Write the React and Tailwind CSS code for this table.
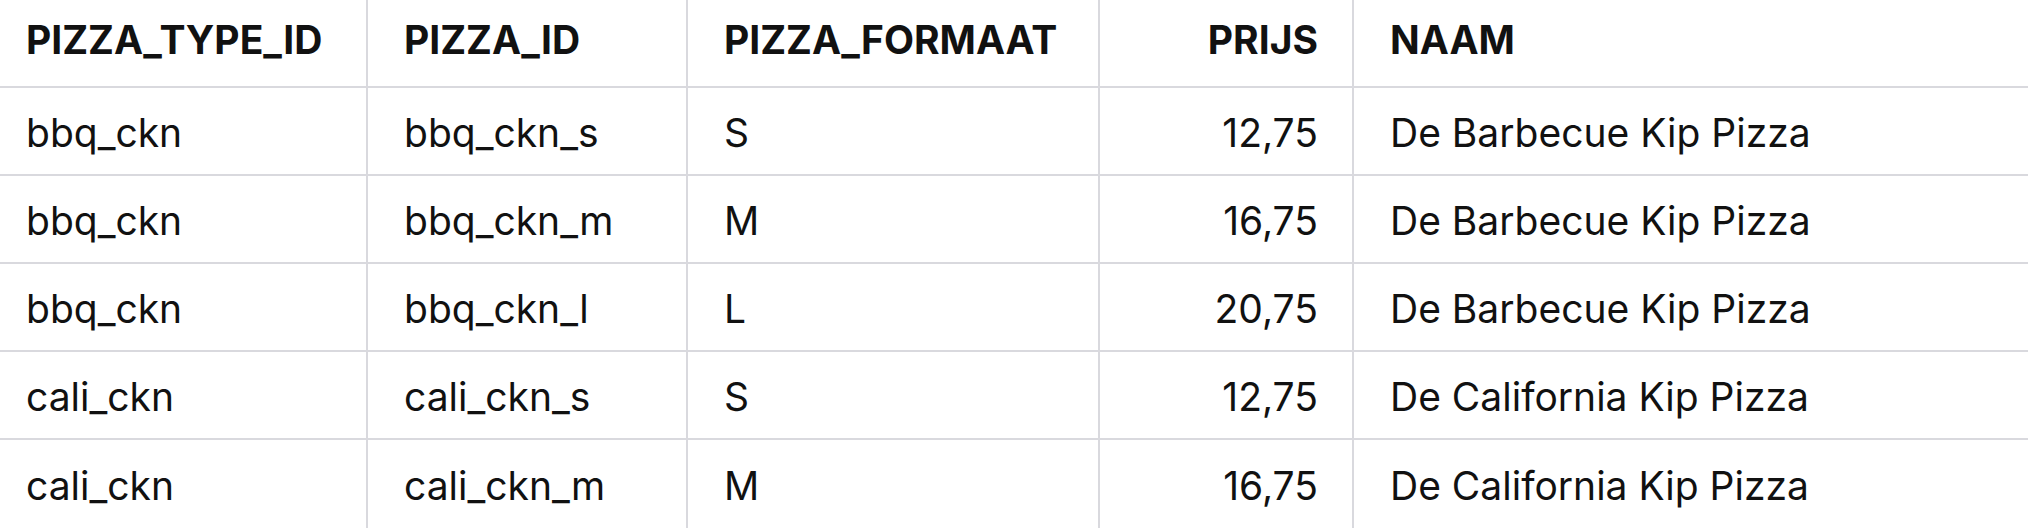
const columns = [
  { key: "typeId", label: "PIZZA_TYPE_ID" },
  { key: "pizzaId", label: "PIZZA_ID" },
  { key: "formaat", label: "PIZZA_FORMAAT" },
  { key: "prijs", label: "PRIJS", right: true },
  { key: "naam", label: "NAAM" },
];

const rows = [
  { typeId: "bbq_ckn", pizzaId: "bbq_ckn_s", formaat: "S", prijs: "12,75", naam: "De Barbecue Kip Pizza" },
  { typeId: "bbq_ckn", pizzaId: "bbq_ckn_m", formaat: "M", prijs: "16,75", naam: "De Barbecue Kip Pizza" },
  { typeId: "bbq_ckn", pizzaId: "bbq_ckn_l", formaat: "L", prijs: "20,75", naam: "De Barbecue Kip Pizza" },
  { typeId: "cali_ckn", pizzaId: "cali_ckn_s", formaat: "S", prijs: "12,75", naam: "De California Kip Pizza" },
  { typeId: "cali_ckn", pizzaId: "cali_ckn_m", formaat: "M", prijs: "16,75", naam: "De California Kip Pizza" },
];

const cellBase = [
  "pl-[26px] pr-4",
  "pl-[36px] pr-4 border-l-2 border-[#d9d9de]",
  "pl-[36px] pr-4 border-l-2 border-[#d9d9de]",
  "pl-4 pr-[34px] border-l-2 border-[#d9d9de] justify-end",
  "pl-[36px] pr-4 border-l-2 border-[#d9d9de]",
];

function Row({ cells, header, last }) {
  return (
    <div
      className={
        "grid grid-cols-[366px_320px_412px_254px_1fr] h-[88px] " +
        (last ? "" : "border-b-2 border-[#d9d9de]")
      }
    >
      {cells.map((c, i) => (
        <div
          key={i}
          className={
            "flex items-center " +
            cellBase[i] +
            (header ? " font-bold pb-[6px]" : " font-normal pt-[5px]")
          }
        >
          {c}
        </div>
      ))}
    </div>
  );
}

export default function App() {
  return (
    <div
      className="w-[2028px] h-[528px] bg-white text-[#111] text-[39px] overflow-hidden"
      style={{ fontFamily: "Inter, 'Noto Sans', sans-serif" }}
    >
      <Row header cells={columns.map((c) => c.label)} />
      {rows.map((r, i) => (
        <Row
          key={i}
          last={i === rows.length - 1}
          cells={columns.map((c) => r[c.key])}
        />
      ))}
    </div>
  );
}
